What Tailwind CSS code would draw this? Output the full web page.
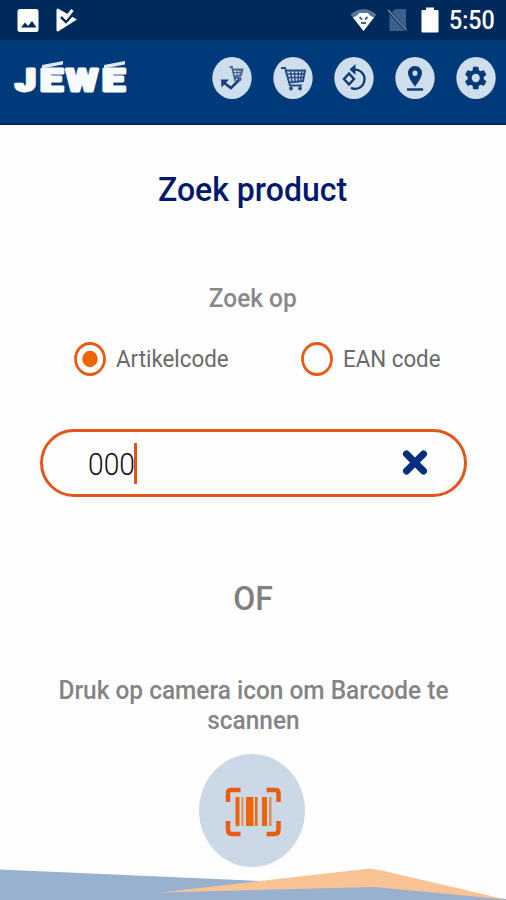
<!DOCTYPE html>
<html lang="nl">
<head>
<meta charset="utf-8">
<title>Zoek product</title>
<script src="https://cdn.jsdelivr.net/npm/@tailwindcss/browser@4"></script>
</head>
<body class="bg-white">
<div class="relative flex h-[900px] w-[506px] flex-col overflow-hidden bg-[#fefefe] font-['Roboto',sans-serif]">
  <!-- status bar -->
  <div class="flex h-10 shrink-0 items-center bg-[#002a5c] pl-[17px] pr-3">
    <svg class="size-[23px]" viewBox="0 0 23 23"><rect x="0.5" y="0" width="21" height="23" rx="2.5" fill="#fff"/><path d="M4 18.500l4-5 3 3.500 4-5 4.500 6.500z" fill="#002a5c"/></svg>
    <svg class="ml-4 h-6 w-[22px]" viewBox="0 0 22 24"><path d="M2 0.500L21 11.500 2 23.500Q0.500 23.500 0.500 22V2Q0.500 0.500 2 0.500z" fill="#fff"/><path d="M5 9l5 5L19 4" fill="none" stroke="#002a5c" stroke-width="2.500"/><path d="M5.500 5.500l4.500 4.500L16.500 2" fill="none" stroke="#fff" stroke-width="3"/></svg>
    <svg class="ml-auto h-6 w-[27px]" viewBox="0 0 27 24"><path d="M0.500 6.500Q13.500-4 26.500 6.500L13.500 23z" fill="#57779b"/><path d="M0 11L13.500 24 27 11v13H0z" fill="#002a5c"/><path d="M3 9.500Q8 7.500 9 5h9Q19 7.500 24 9.500L13.500 23z" fill="#fff"/><path d="M9.500 9l2.500 2.500M17.500 9L15 11.500M11 15h5" stroke="#46648a" stroke-width="1.800"/></svg>
    <svg class="ml-2.5 h-6 w-[21px]" viewBox="0 0 21 24"><path d="M8 1h10q1 0 1 1v18L5 4zM2.500 6L18 23H4q-1.500 0-1.500-1.500z" fill="#3c608a"/><path d="M1 2l18.500 20" stroke="#6482a5" stroke-width="1.800"/></svg>
    <svg class="ml-[13px] h-[26px] w-[18px]" viewBox="0 0 18 26"><path d="M1.500 3H5V0.500h8V3h3.500q1 0 1 1v20.500q0 1-1 1h-15q-1 0-1-1V4q0-1 1-1z" fill="#fff"/></svg>
    <span class="ml-[10px] w-[45px] origin-left scale-x-[0.93] whitespace-nowrap text-[25px] font-medium leading-none text-white">5:50</span>
  </div>
  <!-- app bar -->
  <div class="flex h-[85px] shrink-0 border-b-2 border-[#061f6b] bg-[#003a7b] pl-2 pr-[10px]">
    <svg class="mt-[14px] h-[46px] w-[124px]" viewBox="0 0 124 46" role="img" aria-label="JEWE">
      <g font-family="Roboto, sans-serif" font-weight="900" font-size="31" fill="#f8fafc" stroke="#f8fafc" stroke-width="2.800" stroke-linejoin="round">
        <text x="7" y="37" textLength="21" lengthAdjust="spacingAndGlyphs">J</text>
        <text x="32" y="37" textLength="23" lengthAdjust="spacingAndGlyphs">E</text>
        <text x="58" y="37" textLength="32" lengthAdjust="spacingAndGlyphs">W</text>
        <text x="94" y="37" textLength="23" lengthAdjust="spacingAndGlyphs">E</text>
      </g>
      <path d="M34 11l21-4v3.500l-21 4zM96 11l21-4v3.500l-21 4z" fill="#dfe8f2"/>
    </svg>
    <div class="ml-auto mt-4 flex gap-[21px]">
      <svg class="h-[43px] w-10" viewBox="0 0 40 43"><ellipse cx="20" cy="22" rx="19.700" ry="21" fill="#cfdeec"/><path d="M11 26l8 6 10-10" fill="none" stroke="#173d7b" stroke-width="2.500"/><path d="M9 23.500h8l-7.500 8z" fill="#173d7b"/><path d="M17.500 11h2.500l2.500 11h6M21 13.500h9.500l-1.500 6-7 1" fill="none" stroke="#49678f" stroke-width="1.800"/><path d="M22 16.500h8M25 13v8M28 13v7" stroke="#49678f" stroke-width="1.200"/><circle cx="23" cy="24" r="1.200" fill="#49678f"/><circle cx="28" cy="24" r="1.200" fill="#49678f"/></svg>
      <svg class="h-[43px] w-10" viewBox="0 0 40 43"><ellipse cx="20" cy="22" rx="19.700" ry="21" fill="#cfdeec"/><path d="M8 12h4l5 17.500h12M13.500 14.500H32l-2 10.500-14 1.500" fill="none" stroke="#284c83" stroke-width="2"/><path d="M14 18h17M15 21.500h15M17.500 15l1.500 11M21.500 15l.5 11M25.500 15l-.5 11M29 15l-1.500 10" stroke="#284c83" stroke-width="1.500"/><circle cx="18" cy="32.500" r="1.900" fill="#284c83"/><circle cx="27" cy="32.500" r="1.900" fill="#284c83"/></svg>
      <svg class="h-[43px] w-10" viewBox="0 0 40 43"><ellipse cx="20" cy="22" rx="19.700" ry="21" fill="#cfdeec"/><path d="M15 17.500l5 5.500-5 5.500-5-5.500z" fill="none" stroke="#103b78" stroke-width="2.500"/><path d="M19 13.500c6.500-.5 11.500 3.500 11.500 9.500s-4.500 10-9.500 10q-2.500 0-4-1.500" fill="none" stroke="#103b78" stroke-width="2.300"/><path d="M21.500 8v11l-6-5.500z" fill="#103b78"/></svg>
      <svg class="h-[43px] w-10" viewBox="0 0 40 43"><ellipse cx="20" cy="22" rx="19.700" ry="21" fill="#cfdeec"/><path fill-rule="evenodd" d="M20 10c4 0 7 3 7 7 0 5-7 13.500-7 13.500s-7-8.500-7-13.500c0-4 3-7 7-7zm0 4.500a2.500 2.700 0 1 0 0 5.400 2.500 2.700 0 0 0 0-5.400z" fill="#073878"/><path d="M12 33.500h16" stroke="#174580" stroke-width="2.600"/></svg>
      <svg class="h-[43px] w-10" viewBox="0 0 40 43"><ellipse cx="20" cy="22" rx="19.700" ry="21" fill="#cfdeec"/><g transform="translate(6.200 8) scale(1.130 1.170)"><path fill="#073878" d="M19.140 12.940c.04-.3.060-.61.060-.94s-.02-.64-.07-.94l2.030-1.580a.49.490 0 0 0 .12-.61l-1.920-3.320a.488.488 0 0 0-.59-.22l-2.390.96c-.5-.38-1.030-.7-1.620-.94l-.36-2.540a.484.484 0 0 0-.48-.41h-3.840c-.24 0-.43.17-.47.41l-.36 2.540c-.59.24-1.130.57-1.620.94l-2.390-.96c-.22-.08-.47 0-.59.22L2.740 8.870c-.12.21-.08.470.12.610l2.030 1.580c-.05.300-.09.630-.09.940s.02.640.07.940l-2.030 1.580a.49.490 0 0 0-.12.610l1.920 3.320c.12.220.37.290.59.220l2.390-.96c.5.380 1.030.700 1.620.940l.36 2.540c.05.240.24.410.48.410h3.840c.24 0 .44-.17.47-.41l.36-2.540c.59-.24 1.130-.56 1.620-.94l2.390.96c.22.080.47 0 .59-.22l1.920-3.320c.12-.22.070-.47-.12-.61l-2.010-1.580zM12 15.600A3.600 3.600 0 1 1 12 8.400a3.600 3.600 0 0 1 0 7.200z"/></g></svg>
    </div>
  </div>
  <!-- search -->
  <main class="flex flex-col items-center">
    <h1 class="mt-[45px] origin-center scale-x-[0.97] whitespace-nowrap text-[33px] font-medium leading-10 text-[#00196f]">Zoek product</h1>
    <p class="mt-[72px] scale-x-[0.94] text-[26px] font-medium leading-8 text-[#898989]">Zoek op</p>
    <div class="mt-[27px] flex h-9 w-full items-center pl-[74px]">
      <svg class="h-[35px] w-8" viewBox="0 0 32 35"><ellipse cx="16" cy="17" rx="14.500" ry="15.500" fill="none" stroke="#e85b10" stroke-width="2.800"/><ellipse cx="16" cy="17" rx="7.700" ry="8.300" fill="#ee6500"/></svg>
      <span class="ml-[10px] w-[185px] origin-left scale-x-[0.93] whitespace-nowrap text-[24px] leading-none text-[#6a6a6a]">Artikelcode</span>
      <svg class="h-[35px] w-8" viewBox="0 0 32 35"><ellipse cx="16" cy="17" rx="14.500" ry="15.500" fill="none" stroke="#e85b10" stroke-width="2.800"/></svg>
      <span class="ml-[10px] origin-left scale-x-[0.93] whitespace-nowrap text-[24px] leading-none text-[#6a6a6a]">EAN code</span>
    </div>
    <div class="mt-[52px] flex h-[68px] w-[427px] items-center rounded-full border-[3px] border-[#e2561a] pl-[45px] pr-[36px]">
      <span class="mt-0.5 w-[46px] origin-left scale-x-[0.91] whitespace-nowrap text-[31px] font-light leading-none text-[#111]">000</span>
      <span class="h-[41px] w-[3px] bg-[#e5501b]"></span>
      <svg class="ml-auto h-7 w-[26px]" viewBox="0 0 26 28"><path d="M4.500 5l17 17M21.500 5l-17 17" stroke="#052f7c" stroke-width="7" stroke-linecap="round"/></svg>
    </div>
    <p class="mt-[81px] scale-x-[0.94] text-[34px] font-medium leading-10 text-[#808080]">OF</p>
    <p class="mt-[57px] scale-x-[0.94] whitespace-nowrap text-center text-[26px] font-medium leading-[30px] text-[#858585]">Druk op camera icon om Barcode te<br>scannen</p>
    <svg class="mt-[19px] h-[114px] w-[108px]" viewBox="0 0 108 114"><ellipse cx="53" cy="56.500" rx="53" ry="56.500" fill="#cbd9e6"/><g fill="none" stroke="#e85d12" stroke-width="4.500"><path d="M29 48V39Q29 36 32 36H41.500M67.500 36h9q3 0 3 3v9M29 67v9q0 4 4 4H41.500M67.500 80H75.500q4 0 4-4v-9"/></g><g fill="#ee640b"><rect x="36.500" y="43" width="4" height="29"/><rect x="42.500" y="43" width="2" height="29" opacity=".65"/><rect x="47" y="43" width="7.500" height="29"/><rect x="56" y="43" width="2.500" height="29"/><rect x="63" y="43" width="5" height="29"/><rect x="70" y="43" width="2.500" height="29" opacity=".65"/></g></svg>
  </main>
  <svg class="absolute bottom-0 left-0 h-8 w-[506px]" viewBox="0 0 506 32"><path d="M0 1.500L260 13l110 3 136 15v1H0z" fill="#97b1cf"/><path d="M160 24.500L260 13 370 0.500l12 2L506 31.500 374 19z" fill="#f9c393"/></svg>
</div>
</body>
</html>
